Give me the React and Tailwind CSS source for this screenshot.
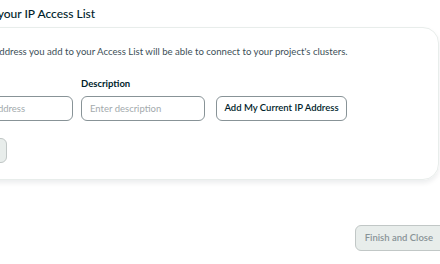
export default function App() {
  return (
    <div className="w-[440px] h-[264px] overflow-hidden bg-white text-[#001E2B]" style={{ fontFamily: 'Lato, "Open Sans", sans-serif' }}>
      <div className="h-[27px] ml-[-80px] flex items-center pt-[1px]">
        <h2 className="text-[12px] font-medium whitespace-nowrap">Add entries to your IP Access List</h2>
      </div>
      <div className="ml-[-70px] w-[509px] h-[153px] rounded-2xl border border-[#E8EDEB] shadow-[0_3px_5px_rgba(0,30,43,0.08)] px-[18px] pt-[17px]">
        <p className="text-[9.6px] leading-[14px] text-[#3D4F58] whitespace-nowrap">
          Only an IP address you add to your Access List will be able to connect to your project's clusters.
        </p>
        <div className="mt-[18px] flex items-end gap-2">
          <div className="flex flex-col gap-[5px]">
            <label className="text-[9.5px] leading-[14px] font-bold">IP Address</label>
            <input
              placeholder="Enter IP address"
              className="w-[124px] h-[25px] rounded-md border border-[#889397] px-2 text-[9.5px] placeholder:text-[#A3AAAD] outline-none"
            />
          </div>
          <div className="flex flex-col gap-[5px]">
            <label className="text-[9.5px] leading-[14px] font-bold">Description</label>
            <input
              placeholder="Enter description"
              className="w-[124px] h-[25px] rounded-md border border-[#889397] px-2 text-[9.5px] placeholder:text-[#A3AAAD] outline-none"
            />
          </div>
          <button className="ml-[3px] w-[131px] h-[25px] rounded-md border border-[#889397] bg-white text-[9.5px] font-semibold whitespace-nowrap">
            Add My Current IP Address
          </button>
        </div>
        <button className="mt-[17px] w-[58px] h-[25px] rounded-md border border-[#C1C7C6] bg-[#E8EDEB] text-[9.5px] text-[#889397]">
          Add
        </button>
      </div>
      <div className="mt-[45px] flex justify-end mr-[-12px]">
        <button className="h-[26px] pl-[9px] pr-[18px] rounded-md border border-[#C1C7C6] bg-[#E8EDEB] text-[9.5px] font-semibold text-[#889397] whitespace-nowrap">
          Finish and Close
        </button>
      </div>
    </div>
  );
}
